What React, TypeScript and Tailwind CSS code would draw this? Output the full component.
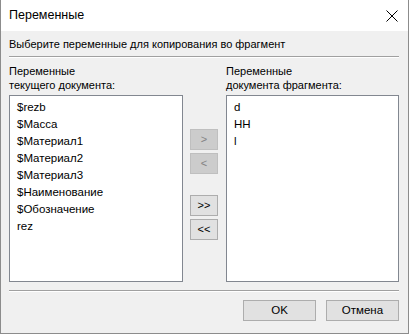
const leftItems = ['$rezb', '$Масса', '$Материал1', '$Материал2', '$Материал3', '$Наименование', '$Обозначение', 'rez'];
const rightItems = ['d', 'НН', 'l'];

function MoveButton({ label, disabled, className = '' }: { label: string; disabled?: boolean; className?: string }) {
  return (
    <button
      disabled={disabled}
      className={
        'w-[28px] h-[21px] flex items-center justify-center text-[11px] leading-none border ' +
        (disabled ? 'bg-[#cccccc] border-[#bfbfbf] text-[#838383]' : 'bg-[#e1e1e1] border-[#adadad] text-black') +
        ' ' +
        className
      }
    >
      {label}
    </button>
  );
}

function ListBox({ items, className = '' }: { items: string[]; className?: string }) {
  return (
    <div className={'h-[187px] bg-white border border-[#828790] pt-[3px] pl-[7px] ' + className}>
      {items.map((it) => (
        <div key={it} className="h-[17px] leading-[17px] text-[11.5px] text-black">
          {it}
        </div>
      ))}
    </div>
  );
}

export default function App() {
  return (
    <div
      className="w-[409px] h-[334px] flex flex-col border-l border-r border-b border-[#8c8c8c] bg-[#f0f0f0] text-black"
      style={{ fontFamily: '"Liberation Sans", Arial, sans-serif' }}
    >
      <div className="h-[31px] bg-white flex items-center justify-between pl-[8px] pr-[10px]">
        <span className="text-[12.5px] leading-none">Переменные</span>
        <svg width="12" height="12" viewBox="0 0 12 12" className="text-black">
          <path d="M0.5 0.5 L11.5 11.5 M11.5 0.5 L0.5 11.5" stroke="currentColor" strokeWidth="1" />
        </svg>
      </div>

      <div className="flex-1 flex flex-col pl-[8px] pr-[9px]">
        <div className="pt-[6px] h-[21px] text-[11px] leading-[14px]">Выберите переменные для копирования во фрагмент</div>
        <div className="mt-[4px] h-[2px] border-t border-[#a0a0a0] bg-white" />

        <div className="flex mt-[6px] text-[11px] leading-[14px] h-[31px]">
          <div className="w-[217px]">
            Переменные
            <br />
            текущего документа:
          </div>
          <div>
            Переменные
            <br />
            документа фрагмента:
          </div>
        </div>

        <div className="flex">
          <ListBox items={leftItems} className="w-[174px]" />
          <div className="ml-[7px] mr-[8px] flex flex-col pt-[34px]">
            <MoveButton label=">" disabled />
            <MoveButton label="<" disabled className="mt-[3px]" />
            <MoveButton label=">>" className="mt-[21px]" />
            <MoveButton label="<<" className="mt-[3px]" />
          </div>
          <ListBox items={rightItems} className="w-[173px]" />
        </div>

        <div className="mt-[8px] h-[2px] border-t border-[#a0a0a0] bg-white" />

        <div className="flex justify-end gap-[10px] mt-[8px]">
          <button className="w-[73px] h-[21px] bg-[#e1e1e1] border border-[#adadad] text-[11.5px] leading-none">OK</button>
          <button className="w-[73px] h-[21px] bg-[#e1e1e1] border border-[#adadad] text-[11.5px] leading-none">Отмена</button>
        </div>
      </div>
    </div>
  );
}
